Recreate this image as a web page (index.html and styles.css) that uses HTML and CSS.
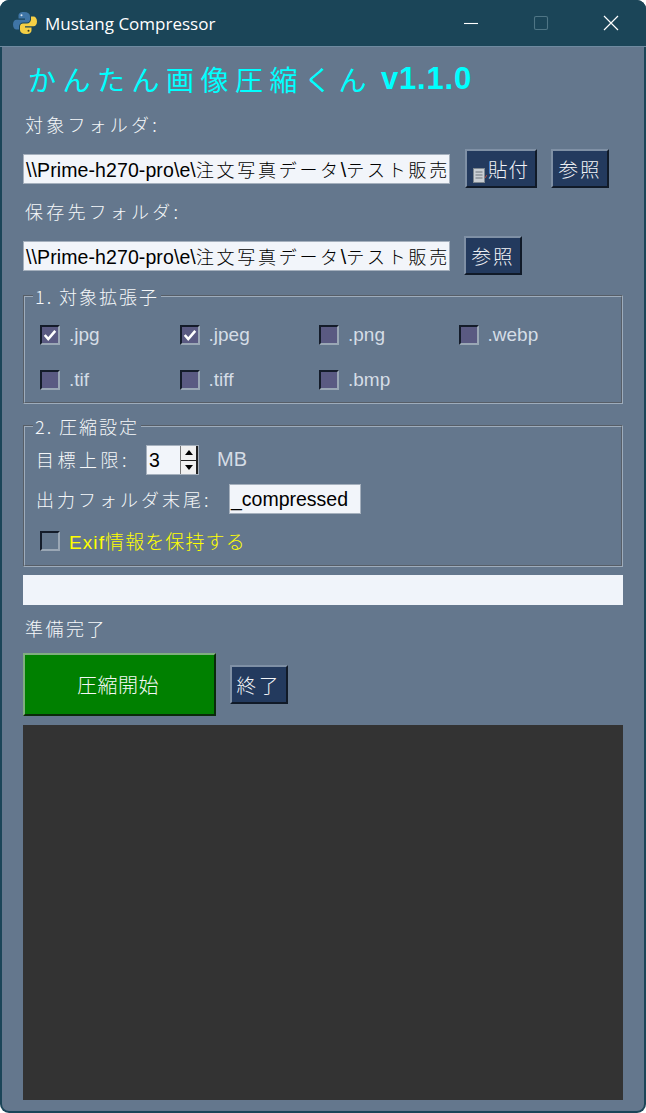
FILE: index.html
```html
<!DOCTYPE html>
<html lang="ja">
<head>
<meta charset="utf-8">
<title>Mustang Compressor</title>
<link rel="stylesheet" href="styles.css">
</head>
<body>
<div class="window">
  <header class="titlebar">
    <svg class="app-icon" viewBox="0 0 24 24" aria-hidden="true">
      <path fill="#3f75a6" d="M11 1C7 1 5.500 2.500 5.500 5v2.500H12v1.200H3.500C1.500 8.700 0 10.500 0 13.500s1.500 5 3.500 5H6v-3c0-2.200 1.800-4 4-4h4c1.700 0 3-1.300 3-3V5c0-2.300-2-4-6-4z"/>
      <path fill="#f5cf45" d="M13 23c4 0 5.500-1.500 5.500-4v-2.500H12v-1.200h8.500c2 0 3.500-1.800 3.500-4.800s-1.500-5-3.500-5H18v3c0 2.200-1.800 4-4 4h-4c-1.700 0-3 1.300-3 3V19c0 2.300 2 4 6 4z"/>
      <circle cx="8.500" cy="4.200" r="1" fill="#dfe8f0"/>
      <circle cx="15.500" cy="19.800" r="1" fill="#3a3a20"/>
    </svg>
    <span class="app-title">Mustang Compressor</span>
    <div class="win-controls">
      <svg class="win-btn" viewBox="0 0 16 16" aria-hidden="true"><path d="M1 8.500h14" stroke="#fff" stroke-width="1.100"/></svg>
      <svg class="win-btn" viewBox="0 0 16 16" aria-hidden="true"><rect x="1.500" y="1.500" width="13" height="13" rx="1.500" fill="none" stroke="#4f7585" stroke-width="1.100"/></svg>
      <svg class="win-btn" viewBox="0 0 16 16" aria-hidden="true"><path d="M1 1l14 14M15 1L1 15" stroke="#fff" stroke-width="1.200"/></svg>
    </div>
  </header>

  <main class="content">
    <h1 class="app-heading"><span class="heading-ja">かんたん画像圧縮くん</span><span class="heading-ver">v1.1.0</span></h1>

    <div class="label folder-label">対象フォルダ:</div>
    <div class="path-row">
      <div class="path-field"><span class="latin">\\Prime-h270-pro\e\</span><span class="cjk">注文写真データ</span><span class="latin">\</span><span class="cjk">テスト販売</span></div>
      <button class="btn btn-paste">
        <svg class="clip-icon" viewBox="0 0 14 16" aria-hidden="true">
          <rect x="0.500" y="1.500" width="11" height="14" fill="#c9ced3" stroke="#7d8790"/>
          <path d="M2.500 5h7M2.500 8h7M2.500 11h7" stroke="#6c747c"/>
          <path d="M12 11l2-3" stroke="#c05040"/>
        </svg><span>貼付</span>
      </button>
      <button class="btn btn-browse">参照</button>
    </div>

    <div class="label folder-label second">保存先フォルダ:</div>
    <div class="path-row">
      <div class="path-field"><span class="latin">\\Prime-h270-pro\e\</span><span class="cjk">注文写真データ</span><span class="latin">\</span><span class="cjk">テスト販売</span></div>
      <button class="btn btn-browse">参照</button>
    </div>

    <fieldset class="group group-ext">
      <legend class="group-legend">1. 対象拡張子</legend>
      <div class="ext-grid">
        <label class="check"><span class="box on"><svg viewBox="0 0 12 12" aria-hidden="true"><path d="M1.500 6l3 3.500 6-7" fill="none" stroke="#fff" stroke-width="2.200"/></svg></span><span>.jpg</span></label>
        <label class="check"><span class="box on"><svg viewBox="0 0 12 12" aria-hidden="true"><path d="M1.500 6l3 3.500 6-7" fill="none" stroke="#fff" stroke-width="2.200"/></svg></span><span>.jpeg</span></label>
        <label class="check"><span class="box"></span><span>.png</span></label>
        <label class="check"><span class="box"></span><span>.webp</span></label>
        <label class="check"><span class="box"></span><span>.tif</span></label>
        <label class="check"><span class="box"></span><span>.tiff</span></label>
        <label class="check"><span class="box"></span><span>.bmp</span></label>
      </div>
    </fieldset>

    <fieldset class="group group-comp">
      <legend class="group-legend">2. 圧縮設定</legend>
      <div class="comp-row limit-row">
        <span class="label limit-label">目標上限:</span>
        <div class="spin">
          <span class="spin-value">3</span>
          <div class="spin-arrows">
            <span class="spin-arrow"><svg viewBox="0 0 8 5" aria-hidden="true"><path d="M4 0l4 5H0z"/></svg></span>
            <span class="spin-arrow"><svg viewBox="0 0 8 5" aria-hidden="true"><path d="M4 5L0 0h8z"/></svg></span>
          </div>
        </div>
        <span class="unit">MB</span>
      </div>
      <div class="comp-row suffix-row">
        <span class="label suffix-label">出力フォルダ末尾:</span>
        <div class="suffix-field">_compressed</div>
      </div>
      <label class="check exif"><span class="box plain"></span><span class="exif-text">Exif情報を保持する</span></label>
    </fieldset>

    <div class="progress"></div>
    <div class="label status">準備完了</div>
    <div class="action-row">
      <button class="btn-start">圧縮開始</button>
      <button class="btn btn-browse btn-quit">終了</button>
    </div>
    <div class="log"></div>
  </main>
</div>
</body>
</html>
```

FILE: styles.css
```css
* { box-sizing: border-box; }
html, body { margin: 0; height: 100%; background: #fff; }
body { font-family: "Liberation Sans", "Noto Sans CJK JP", sans-serif; overflow: hidden; }

.window {
  width: 646px;
  height: 1113px;
  display: flex;
  flex-direction: column;
  background: #1b4558;
  border-radius: 9px;
  overflow: hidden;
}

.titlebar {
  height: 47px;
  flex: none;
  display: flex;
  align-items: center;
  padding-left: 13px;
  background: #1b4558;
  border-bottom: 1px solid #6f8aa0;
}
.app-icon { width: 24px; height: 24px; flex: none; }
.app-title {
  margin-left: 8px;
  font-family: "Open Sans", "Noto Sans", sans-serif;
  font-size: 17px;
  color: #fff;
}
.win-controls { margin-left: auto; display: flex; margin-right: 27px; gap: 54px; }
.win-btn { width: 16px; height: 16px; display: block; }

.content {
  flex: 1;
  margin: 0 2px 2px 2px;
  padding: 0 21px;
  background: #64778d;
  border-radius: 0 0 7px 7px;
  display: flex;
  flex-direction: column;
  min-height: 0;
}

.app-heading {
  margin: 12px 0 0 0;
  height: 40px;
  padding-left: 5px;
  display: flex;
  align-items: center;
  color: #00ffff;
  font-size: 28px;
  font-weight: 400;
  white-space: nowrap;
}
.heading-ja { font-family: "Noto Sans CJK JP", sans-serif; letter-spacing: 6.500px; }
.heading-ver { font-family: "Liberation Sans", sans-serif; font-weight: 700; font-size: 31px; margin-left: 8px; letter-spacing: 0.800px; }

.label {
  font-family: "Noto Sans CJK JP", sans-serif;
  font-size: 18px;
  font-weight: 300;
  color: #f5f7f9;
  letter-spacing: 3.200px;
  white-space: nowrap;
}
.folder-label { height: 30px; line-height: 30px; margin-top: 10px; padding-left: 2px; }
.folder-label.second { margin-top: 8px; }

.path-row { display: flex; align-items: flex-start; height: 39px; margin-top: 10px; }
.path-field {
  width: 427px;
  height: 30px;
  margin-top: 5px;
  padding-left: 2px;
  background: #f2f5fa;
  border: 1px solid #a5b0bd;
  color: #000;
  font-size: 19.500px;
  line-height: 28px;
  white-space: nowrap;
  overflow: hidden;
}
.cjk { font-family: "Noto Sans CJK JP", sans-serif; font-size: 18px; font-weight: 300; letter-spacing: 2.700px; }
.latin { font-family: "Liberation Sans", sans-serif; letter-spacing: 0.100px; }

.btn {
  height: 39px;
  padding: 0;
  background: #233a5e;
  color: #f2f4f7;
  font-family: "Noto Sans CJK JP", sans-serif;
  font-size: 19.500px;
  font-weight: 300;
  letter-spacing: 2px;
  border: 2px solid;
  border-color: #7f90a5 #101a28 #101a28 #7f90a5;
  display: flex;
  align-items: center;
  justify-content: center;
}
.btn-browse { width: 58px; margin-left: 14px; }
.btn-paste { width: 72px; margin-left: 15px; letter-spacing: 1px; }
.btn-quit { letter-spacing: 3px; }
.clip-icon { width: 14px; height: 16px; margin-top: 13px; margin-right: 1px; flex: none; }

.group {
  margin: 0;
  padding: 0;
  border: 2px groove #9eacbb;
  min-width: 0;
}
.group-legend {
  margin-left: 8px;
  padding: 0 2px;
  height: 24px;
  line-height: 24px;
  font-family: "Noto Sans CJK JP", sans-serif;
  font-size: 18px;
  font-weight: 300;
  letter-spacing: 2px;
  color: #f5f7f9;
}
.group-ext { margin-top: 9px; height: 120px; }
.ext-grid {
  display: grid;
  grid-template-columns: repeat(4, 139.500px);
  grid-auto-rows: 45px;
  padding: 4px 0 0 15px;
}
.check {
  display: flex;
  align-items: center;
  gap: 9px;
  font-size: 19px;
  color: #d5dde6;
}
.box {
  width: 20px;
  height: 20px;
  flex: none;
  background: #5a5a82;
  border: 2px solid;
  border-color: #141c2a #9aa7b5 #9aa7b5 #141c2a;
  display: flex;
  align-items: center;
  justify-content: center;
}
.box svg { width: 14px; height: 14px; }
.box.plain { background: #64778d; margin-top: 1px; }

.group-comp { margin-top: 10px; height: 153px; }
.comp-row { display: flex; align-items: center; }
.limit-row { height: 30px; margin-top: 7px; padding-left: 11px; }
.limit-label { letter-spacing: 3.500px; width: 110px; margin-top: -2px; }
.spin {
  width: 53px;
  height: 30px;
  display: flex;
  background: #f2f5fa;
  border: 1px solid #a5b0bd;
}
.spin-value { flex: 1; padding-left: 2px; font-size: 19.500px; line-height: 28px; color: #000; }
.spin-arrows { width: 18px; display: flex; flex-direction: column; border-left: 1px solid #777; border-right: 2px solid #222; }
.spin-arrow { flex: 1; display: flex; align-items: center; justify-content: center; background: #f0f0f0; }
.spin-arrow + .spin-arrow { border-top: 1px solid #222; }
.spin-arrow svg { width: 8px; height: 5px; display: block; }
.unit { margin-left: 18px; font-size: 20px; color: #d5dde6; margin-top: -2px; }
.suffix-row { height: 30px; margin-top: 9px; padding-left: 11px; }
.suffix-label { letter-spacing: 3px; width: 193px; }
.suffix-field {
  width: 132px;
  height: 30px;
  padding-left: 1px;
  background: #f2f5fa;
  border: 1px solid #a5b0bd;
  font-size: 19.500px;
  line-height: 28px;
  color: #000;
}
.exif { margin: 14px 0 0 15px; height: 24px; }
.exif-text { color: #ffff00; font-family: "Liberation Sans", "Noto Sans CJK JP", sans-serif; font-weight: 300; letter-spacing: 1.100px; }

.progress { height: 30px; margin-top: 8px; background: #f0f4fa; flex: none; }
.status { height: 30px; line-height: 30px; margin-top: 8px; padding-left: 2px; letter-spacing: 2.500px; }
.action-row { display: flex; align-items: center; height: 63px; margin-top: 10px; flex: none; }
.btn-start {
  width: 193px;
  height: 63px;
  background: #008000;
  color: #f4f8f4;
  font-family: "Noto Sans CJK JP", sans-serif;
  font-size: 20px;
  font-weight: 300;
  letter-spacing: 0.500px;
  padding: 0 3px 0 0;
  border: 2px solid;
  border-color: #7fae7f #0a2a0a #0a2a0a #7fae7f;
}
.log { flex: 1; margin: 9px 0 11px 0; background: #333333; min-height: 0; }
```
